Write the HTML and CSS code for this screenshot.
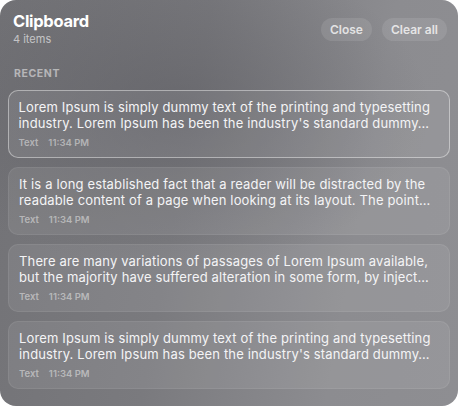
FILE: index.html
```html
<!DOCTYPE html>
<html>
<head>
    <title>Clipboard</title>
    <link rel="stylesheet" href="styles.css">
</head>
<body>
    <div class="panel">
        <div class="header">
            <div>
                <h1 class="title">Clipboard</h1>
                <div class="count">4 items</div>
            </div>
            <div class="actions">
                <button class="pill">Close</button>
                <button class="pill">Clear all</button>
            </div>
        </div>

        <div class="section">Recent</div>

        <div class="list">
            <div class="item selected">
                <div class="item-text">Lorem Ipsum is simply dummy text of the printing and typesetting industry. Lorem Ipsum has been the industry's standard dummy…</div>
                <div class="meta"><span>Text</span><span>11:34 PM</span></div>
            </div>
            <div class="item">
                <div class="item-text">It is a long established fact that a reader will be distracted by the readable content of a page when looking at its layout. The point…</div>
                <div class="meta"><span>Text</span><span>11:34 PM</span></div>
            </div>
            <div class="item">
                <div class="item-text">There are many variations of passages of Lorem Ipsum available, but the majority have suffered alteration in some form, by inject…</div>
                <div class="meta"><span>Text</span><span>11:34 PM</span></div>
            </div>
            <div class="item">
                <div class="item-text">Lorem Ipsum is simply dummy text of the printing and typesetting industry. Lorem Ipsum has been the industry's standard dummy…</div>
                <div class="meta"><span>Text</span><span>11:34 PM</span></div>
            </div>
        </div>
    </div>
</body>
</html>
```

FILE: styles.css
```css
body {
    margin: 0;
    background: #fff;
    font-family: Inter, "Noto Sans", sans-serif;
    color: #f2f2f4;
}
.panel {
    height: 406px;
    box-sizing: border-box;
    border-radius: 16px;
    padding: 11px 8px 0;
    background:
        radial-gradient(ellipse 260px 160px at 170px 110px, rgba(90, 90, 96, 0.55), rgba(90, 90, 96, 0) 100%),
        linear-gradient(100deg, #727276 0%, #7a7a7e 40%, #8c8c90 75%, #8e8e92 100%);
    overflow: hidden;
}
.header {
    display: flex;
    justify-content: space-between;
    align-items: flex-start;
    padding: 0 3px 0 5px;
}
.title {
    margin: 0;
    font-size: 16.5px;
    line-height: 21px;
    font-weight: 700;
    letter-spacing: -0.3px;
    color: #fff;
}
.count {
    font-size: 11px;
    line-height: 14px;
    color: rgba(255, 255, 255, 0.6);
}
.actions {
    display: flex;
    gap: 10px;
    margin-top: 7px;
}
.pill {
    height: 23px;
    padding: 0 9px;
    border: none;
    border-radius: 12px;
    background: rgba(255, 255, 255, 0.1);
    color: rgba(255, 255, 255, 0.75);
    font-family: inherit;
    font-size: 12px;
    font-weight: 600;
}
.section {
    margin: 21px 0 9px 6px;
    font-size: 10.5px;
    line-height: 14px;
    font-weight: 700;
    letter-spacing: 0.6px;
    text-transform: uppercase;
    color: rgba(255, 255, 255, 0.5);
}
.list {
    display: flex;
    flex-direction: column;
    gap: 9px;
}
.item {
    height: 68px;
    box-sizing: border-box;
    padding: 8px 10px 0;
    border-radius: 10px;
    border: 1px solid rgba(255, 255, 255, 0.07);
    background: rgba(255, 255, 255, 0.08);
}
.item.selected {
    border: 1.5px solid rgba(255, 255, 255, 0.42);
    padding: 7.5px 9.5px 0;
}
.item-text {
    font-size: 13px;
    line-height: 16px;
    letter-spacing: 0.15px;
    color: #f4f4f6;
    display: -webkit-box;
    -webkit-line-clamp: 2;
    -webkit-box-orient: vertical;
    overflow: hidden;
}
.meta {
    display: flex;
    gap: 10px;
    margin-top: 6px;
    font-size: 9.5px;
    line-height: 11px;
    font-weight: 600;
    color: rgba(255, 255, 255, 0.45);
}
```
